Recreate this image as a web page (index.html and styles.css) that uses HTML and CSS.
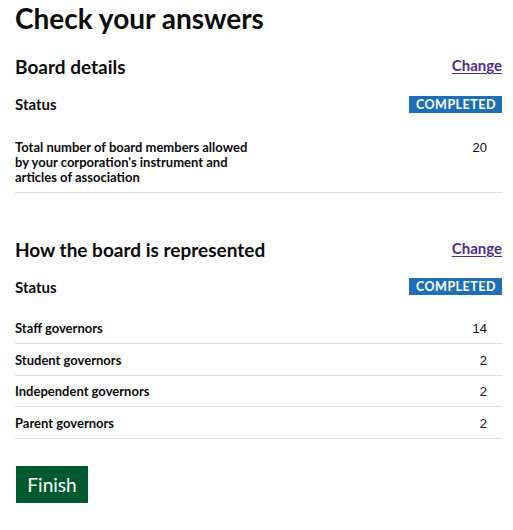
FILE: index.html
```html
<!DOCTYPE html>
<html lang="en">
<head>
<meta charset="utf-8">
<title>Check your answers</title>
<link rel="stylesheet" href="styles.css">
</head>
<body>
<main class="page">
  <h1 class="title">Check your answers</h1>

  <section class="section">
    <div class="section-head">
      <h2 class="section-title">Board details</h2>
      <a class="change" href="#">Change</a>
    </div>
    <div class="status-row">
      <span class="status-label">Status</span>
      <strong class="tag">Completed</strong>
    </div>
    <dl class="list">
      <div class="row">
        <dt class="key">Total number of board members allowed by your corporation's instrument and articles of association</dt>
        <dd class="value">20</dd>
      </div>
    </dl>
  </section>

  <section class="section section-2">
    <div class="section-head">
      <h2 class="section-title">How the board is represented</h2>
      <a class="change" href="#">Change</a>
    </div>
    <div class="status-row">
      <span class="status-label">Status</span>
      <strong class="tag">Completed</strong>
    </div>
    <dl class="list">
      <div class="row"><dt class="key">Staff governors</dt><dd class="value">14</dd></div>
      <div class="row"><dt class="key">Student governors</dt><dd class="value">2</dd></div>
      <div class="row"><dt class="key">Independent governors</dt><dd class="value">2</dd></div>
      <div class="row"><dt class="key">Parent governors</dt><dd class="value">2</dd></div>
    </dl>
  </section>

  <button class="button" type="button">Finish</button>
</main>
</body>
</html>
```

FILE: styles.css
```css
* { box-sizing: border-box; }
html, body { margin: 0; padding: 0; background: #fff; }
body {
  font-family: Lato, "Liberation Sans", Arial, sans-serif;
  color: #0b0c0c;
}
.page {
  padding: 0 11px 0 15px;
}
.title {
  margin: 0;
  padding-top: 2px;
  font-size: 28px;
  line-height: 32px;
  font-weight: 700;
}
.section { margin-top: 20px; }
.section-2 { margin-top: 44px; }
.section-head {
  display: flex;
  justify-content: space-between;
  align-items: center;
}
.section-title {
  margin: 0;
  font-size: 19px;
  line-height: 26px;
  font-weight: 700;
}
.change {
  color: #4c2c92;
  font-size: 15px;
  font-weight: 700;
  text-decoration: underline;
  text-underline-offset: 2px;
  margin-top: -4px;
}
.status-row {
  display: flex;
  justify-content: space-between;
  align-items: center;
  margin-top: 15px;
}
.status-label {
  font-size: 15px;
  font-weight: 700;
}
.tag {
  background: #1d70b8;
  color: #fff;
  font-size: 12.5px;
  font-weight: 700;
  text-transform: uppercase;
  letter-spacing: 0.5px;
  line-height: 17px;
  padding: 0 6px 0 7px;
}
.list { margin: 18px 0 0; }
.section-2 .list { margin-top: 17px; }
.row {
  display: flex;
  justify-content: space-between;
  border-bottom: 1px solid #dcdcdc;
  padding: 8.5px 15px 7px 0;
}
.key {
  width: 50%;
  font-size: 13px;
  font-weight: 700;
  line-height: 15px;
}
.value {
  margin: 0;
  font-family: "Liberation Sans", Arial, sans-serif;
  font-size: 13px;
  line-height: 15px;
}
.button {
  margin-top: 27px;
  margin-left: 1px;
  background: #005a30;
  color: #fff;
  border: 0;
  border-radius: 0;
  box-shadow: 0 2px 0 #002d18;
  font-family: Lato, "Liberation Sans", Arial, sans-serif;
  font-size: 19px;
  line-height: 24px;
  padding: 7px 11px 6px;
  width: 72px;
}
```
